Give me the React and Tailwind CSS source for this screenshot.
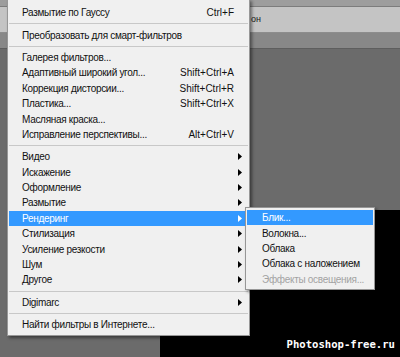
const font = { fontFamily: '"Liberation Sans", Arial, sans-serif' }

const groups = [
  [{ label: 'Размытие по Гауссу', key: 'Ctrl+F' }],
  [{ label: 'Преобразовать для смарт-фильтров' }],
  [
    { label: 'Галерея фильтров...' },
    { label: 'Адаптивный широкий угол...', key: 'Shift+Ctrl+A' },
    { label: 'Коррекция дисторсии...', key: 'Shift+Ctrl+R' },
    { label: 'Пластика...', key: 'Shift+Ctrl+X' },
    { label: 'Масляная краска...' },
    { label: 'Исправление перспективы...', key: 'Alt+Ctrl+V' },
  ],
  [
    { label: 'Видео', sub: true },
    { label: 'Искажение', sub: true },
    { label: 'Оформление', sub: true },
    { label: 'Размытие', sub: true },
    { label: 'Рендеринг', sub: true, active: true },
    { label: 'Стилизация', sub: true },
    { label: 'Усиление резкости', sub: true },
    { label: 'Шум', sub: true },
    { label: 'Другое', sub: true },
  ],
  [{ label: 'Digimarc', sub: true }],
  [{ label: 'Найти фильтры в Интернете...' }],
]

const render = [
  { label: 'Блик...', active: true },
  { label: 'Волокна...' },
  { label: 'Облака' },
  { label: 'Облака с наложением' },
  { label: 'Эффекты освещения...', disabled: true },
]

function Arrow({ white }) {
  return (
    <svg width="4" height="7" viewBox="0 0 4 7" className="shrink-0">
      <path d="M0 0 L4 3.5 L0 7 Z" fill={white ? '#fff' : '#000'} />
    </svg>
  )
}

function Separator() {
  return (
    <div className="h-[7px] flex items-center">
      <div className="w-full h-px bg-[#c8c8c8]" />
    </div>
  )
}

export default function App() {
  return (
    <div className="relative w-[400px] h-[357px] overflow-hidden bg-[#6b6b6b] text-[10px]" style={font}>
      {/* Background workspace */}
      <div className="flex flex-col h-full">
        <div className="h-[7px] bg-[#9d9d9d] border-b border-[#7c7c7c]" />
        <div className="h-[26px] bg-[#c4c4c4] border-b border-[#8d8d8d] flex items-center pl-[251px] text-[9px] text-[#222]">
          <span>он</span>
        </div>
        <div className="h-[16px] bg-[#888888] border-b border-[#5e5e5e]" />
        <div className="flex-1 flex flex-col pl-[160px] pt-[161px]">
          <div className="flex-1 bg-black relative">
            <span
              className="absolute right-[5px] bottom-[4px] text-[10.6px] font-bold text-white"
              style={{ fontFamily: '"DejaVu Sans Mono", "Liberation Mono", monospace' }}
            >
              Photoshop-free.ru
            </span>
          </div>
        </div>
      </div>

      {/* Main menu */}
      <div className="absolute left-[7px] top-[-1px] w-[243px] bg-[#f0f0f0] border border-[#979797] pt-[5px] pb-[3px] px-px shadow-[2px_2px_3px_rgba(0,0,0,0.45)]">
        {groups.map((g, gi) => (
          <div key={gi}>
            {gi > 0 && <Separator />}
            {g.map(item => (
              <div
                key={item.label}
                className={`h-[15.4px] flex items-center pl-[13px] pr-[6px] whitespace-nowrap ${
                  item.active ? 'bg-[#3399ff] text-white' : 'text-[#111]'
                }`}
              >
                <span className="flex-1 tracking-[-0.3px]">{item.label}</span>
                {item.key && <span className="pr-[8px]">{item.key}</span>}
                {item.sub && <Arrow white={item.active} />}
              </div>
            ))}
          </div>
        ))}
      </div>

      {/* Render submenu */}
      <div className="absolute left-[245px] top-[207px] w-[130px] bg-[#f0f0f0] border border-[#979797] py-[2px] px-px shadow-[2px_2px_3px_rgba(0,0,0,0.45)]">
        {render.map(item => (
          <div
            key={item.label}
            className={`h-[15.4px] flex items-center pl-[15px] whitespace-nowrap tracking-[-0.3px] ${
              item.active ? 'bg-[#3399ff] text-white' : item.disabled ? 'text-[#a3a3a3]' : 'text-[#111]'
            }`}
          >
            {item.label}
          </div>
        ))}
      </div>
    </div>
  )
}
